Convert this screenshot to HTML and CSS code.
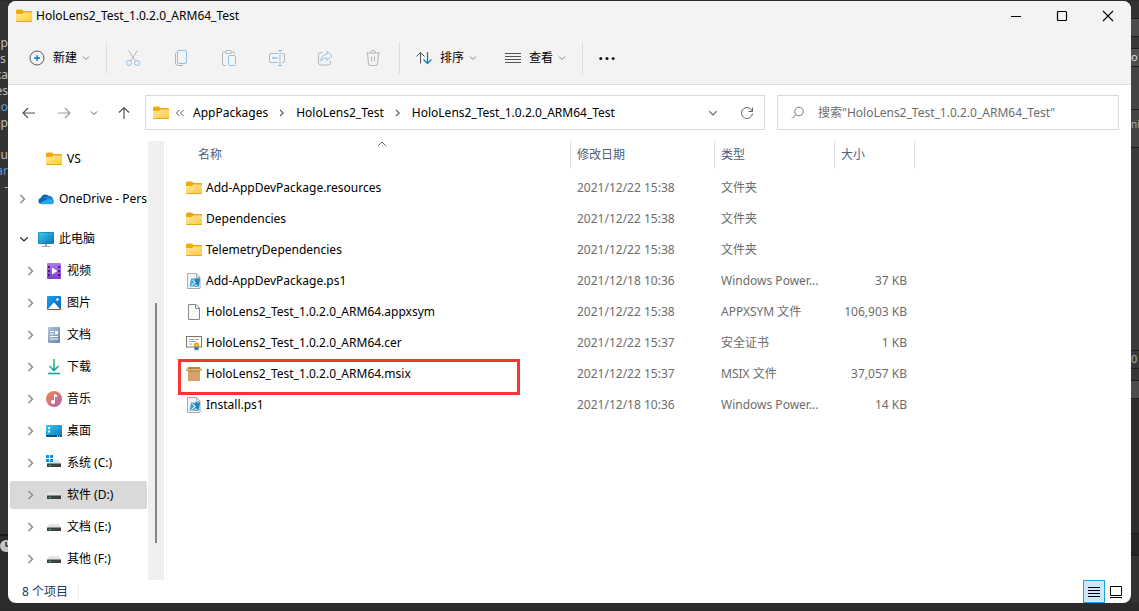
FILE: index.html
```html
<!DOCTYPE html>
<html lang="zh-CN">
<head>
<meta charset="utf-8">
<title>HoloLens2_Test_1.0.2.0_ARM64_Test</title>
<meta name="viewport" content="width=device-width, initial-scale=1">
<link rel="stylesheet" href="styles.css">
</head>
<body>
<svg class="sprite" aria-hidden="true">
  <defs>
    <linearGradient id="gFolder" x1="0" y1="0" x2="1" y2="1"><stop offset="0" stop-color="#ffe9a2"/><stop offset="1" stop-color="#ffc83d"/></linearGradient>
    <linearGradient id="gScreen" x1="0" y1="0" x2="1" y2="1"><stop offset="0" stop-color="#35d0e6"/><stop offset="1" stop-color="#0f6fc0"/></linearGradient>
    <linearGradient id="gVideo" x1="0" y1="0" x2="0" y2="1"><stop offset="0" stop-color="#b176f0"/><stop offset="1" stop-color="#7f3fd0"/></linearGradient>
    <linearGradient id="gPic" x1="0" y1="0" x2="1" y2="1"><stop offset="0" stop-color="#1aa0ec"/><stop offset="1" stop-color="#0b62b8"/></linearGradient>
    <linearGradient id="gDoc" x1="0" y1="0" x2="1" y2="1"><stop offset="0" stop-color="#b4c6da"/><stop offset="1" stop-color="#6686ab"/></linearGradient>
    <linearGradient id="gDown" gradientUnits="userSpaceOnUse" x1="8" y1="0" x2="8" y2="16"><stop offset="0" stop-color="#3cc58d"/><stop offset="1" stop-color="#0c9b97"/></linearGradient>
    <linearGradient id="gMusic" x1="0" y1="0" x2="1" y2="1"><stop offset="0" stop-color="#f7894a"/><stop offset="1" stop-color="#a863b8"/></linearGradient>
  </defs>
  <symbol id="folder" viewBox="0 0 16 16"><path d="M0 3q0-1.500 1.500-1.500h4q.7 0 1.200.6l.8.9H15q1 0 1 1V8H0z" fill="#f2a90c"/><path d="M0 6h6l1.500-1.500H15q1 0 1 1V13q0 1-1 1H1q-1 0-1-1z" fill="url(#gFolder)"/><path d="M.3 13.500h15.400" stroke="#e9a820"/></symbol>
  <symbol id="plus" viewBox="0 0 16 16"><circle cx="8" cy="8" r="7" fill="none" stroke="#5c5c5c"/><path d="M8 5v6M5 8h6" fill="none" stroke="#0078d4" stroke-width="1.300"/></symbol>
  <symbol id="cut" viewBox="0 0 16 16"><path d="M3.500.5l7 10.500M12.500.5l-7 10.500" fill="none" stroke="#b5b5b5"/><circle cx="4" cy="13" r="2.500" fill="none" stroke="#8fc2ea"/><circle cx="12" cy="13" r="2.500" fill="none" stroke="#8fc2ea"/></symbol>
  <symbol id="copy" viewBox="0 0 16 16"><path d="M3.500 2.500Q2.500 3 2.500 4v9q0 2.500 2.500 2.500h5" fill="none" stroke="#b5b5b5"/><rect x="4.500" y=".5" width="9" height="13" rx="1.500" fill="none" stroke="#8fc2ea"/></symbol>
  <symbol id="paste" viewBox="0 0 16 16"><path d="M5 15.500H3q-1.500 0-1.500-1.500V3.500Q1.500 2 3 2h1.500M11 2h1q1.500 0 1.500 1.500V4" fill="none" stroke="#b5b5b5"/><rect x="4.500" y=".5" width="6" height="3" rx="1.500" fill="none" stroke="#b5b5b5"/><rect x="7.500" y="5.500" width="7" height="10" rx="1" fill="none" stroke="#8fc2ea"/></symbol>
  <symbol id="rename" viewBox="0 0 16 16"><path d="M9 3.500H2Q.5 3.500.5 5v6Q.5 12.500 2 12.500h7M13 3.500h1q1.500 0 1.500 1.500v6q0 1.500-1.500 1.500h-1" fill="none" stroke="#b5b5b5"/><path d="M9 .5h4M11 .5v15M9 15.500h4" fill="none" stroke="#8fc2ea"/><path d="M3 8h5.500" stroke="#8fc2ea" stroke-width="1.500"/></symbol>
  <symbol id="share" viewBox="0 0 16 16"><path d="M5.500 2.500H4Q1.500 2.500 1.500 5v7.500Q1.500 15 4 15h7q2.500 0 2.500-2.500V11" fill="none" stroke="#b5b5b5"/><path d="M10 1.500L15 6l-5 4.500V8Q6 7.700 4 11q0-6 6-7z" fill="none" stroke="#8fc2ea" stroke-linejoin="round"/></symbol>
  <symbol id="trash" viewBox="0 0 16 16"><path d="M1 3h14M6 3V1.500Q6 .5 7 .5h2q1 0 1 1V3M2.500 3l1 11q.1 1.500 1.500 1.500h6q1.400 0 1.500-1.500l1-11M6.500 6.500v5M9.500 6.500v5" fill="none" stroke="#b5b5b5"/></symbol>
  <symbol id="sort" viewBox="0 0 16 16"><path d="M4.500 13.500V2.500M.5 6.500l4-4 4 4" fill="none" stroke="#555"/><path d="M11.500 2v11.500M7.500 9.500l4 4 4-4" fill="none" stroke="#0078d4" stroke-width="1.200"/></symbol>
  <symbol id="lines" viewBox="0 0 16 16"><path d="M0 3.500h16M0 6.500h16M0 9.500h16M0 12.500h16" stroke="#555"/></symbol>
  <symbol id="dots" viewBox="0 0 16 16"><g fill="#111"><circle cx="1.800" cy="8.500" r="1.500"/><circle cx="8" cy="8.500" r="1.500"/><circle cx="14.200" cy="8.500" r="1.500"/></g></symbol>
  <symbol id="down" viewBox="0 0 8 8"><path d="M1 2.500l3 3 3-3" fill="none" stroke="currentColor"/></symbol>
  <symbol id="right" viewBox="0 0 8 10"><path d="M1.500 1l4 4-4 4" fill="none" stroke="currentColor" stroke-width="1.400"/></symbol>
  <symbol id="back" viewBox="0 0 16 16"><path d="M14 8H2M7 3L2 8l5 5" fill="none" stroke="currentColor" stroke-width="1.200"/></symbol>
  <symbol id="forward" viewBox="0 0 16 16"><path d="M2 8h12M9 3l5 5-5 5" fill="none" stroke="currentColor" stroke-width="1.200"/></symbol>
  <symbol id="up" viewBox="0 0 16 16"><path d="M8 14V2.500M3 7.500l5-5 5 5" fill="none" stroke="currentColor" stroke-width="1.200"/></symbol>
  <symbol id="refresh" viewBox="0 0 16 16"><path d="M13.300 6.500A5.500 5.500 0 1 0 13.500 8.500M13.500 2.500v4h-4" fill="none" stroke="#666"/></symbol>
  <symbol id="search" viewBox="0 0 16 16"><circle cx="9" cy="6.500" r="4.300" fill="none" stroke="#777"/><path d="M6 9.500L2 13.500" stroke="#777"/></symbol>
  <symbol id="cloud" viewBox="0 0 16 16"><path d="M3 13a3 3 0 0 1-.3-5.900A4.700 4.700 0 0 1 11.200 5.600 4 4 0 0 1 13 13z" fill="#0a64bd"/><path d="M5 7L9.500 5a4.700 4.700 0 0 1 6 4.500l-5-1z" fill="#1580d4"/><path d="M1.500 12.300L9.500 8a3 3 0 0 1 2 .7 2.700 2.700 0 0 1 4.500 2.200A2.600 2.600 0 0 1 13.500 13.300H3.500a3 3 0 0 1-2-1z" fill="#2aa7ea"/></symbol>
  <symbol id="pc" viewBox="0 0 16 16"><rect y="1" width="16" height="12" rx="1" fill="#1679b8"/><rect x=".7" y="1.700" width="14.600" height="10.600" fill="url(#gScreen)"/><path d="M7 13h2v2H7zM4 15h8v1H4z" fill="#9aa4ac"/></symbol>
  <symbol id="video" viewBox="0 0 16 16"><rect x="1" y="0" width="14" height="16" rx="1" fill="url(#gVideo)"/><path d="M2 3h2v2H2zM2 7h2v2H2zM2 11h2v2H2zM12 3h2v2h-2zM12 7h2v2h-2zM12 11h2v2h-2z" fill="#44207a"/><path d="M6 4.500L11.500 8 6 11.500z" fill="#fff"/></symbol>
  <symbol id="pic" viewBox="0 0 16 16"><rect x="1" y="1" width="14" height="14" rx="1" fill="url(#gPic)"/><path d="M2 14l5.300-6q.7-.6 1.400 0l5.300 6z" fill="#fff"/><circle cx="11.500" cy="4.500" r="1.300" fill="#fff"/></symbol>
  <symbol id="doc" viewBox="0 0 16 16"><rect x="2" y="0" width="12" height="16" rx="1" fill="url(#gDoc)"/><path d="M4 4.500h4M4 7h4M4 9.500h8M4 12h8" stroke="#fff" stroke-width="1.200"/><path d="M9 4h3v3.500H9z" fill="#fff"/></symbol>
  <symbol id="download" viewBox="0 0 16 16"><path d="M8 0v11M3.500 7L8 11.500 12.500 7M2 14.500h12" fill="none" stroke="url(#gDown)" stroke-width="1.700"/></symbol>
  <symbol id="music" viewBox="0 0 16 16"><circle cx="8" cy="8" r="8" fill="url(#gMusic)"/><path d="M8 3l3 1v2L9 5.500V11a2 2 0 1 1-1-1.700z" fill="#fff"/></symbol>
  <symbol id="desk" viewBox="0 0 16 16"><rect y="2" width="16" height="12" rx="1" fill="url(#gScreen)"/><path d="M0 12h16v1q0 1-1 1H1q-1 0-1-1z" fill="#0a4f7d"/><path d="M2 4h2v2H2zM2 7.500h2v2H2z" fill="#fff"/><path d="M11 13h1M13 13h1" stroke="#fff"/></symbol>
  <symbol id="drive" viewBox="0 0 16 16"><path d="M3.500 5h9L15 9H1z" fill="#dfe2e6"/><path d="M1 8.500h14V12H1z" fill="#3f3f41"/><path d="M3 10h2v1H3z" fill="#35e040"/></symbol>
  <symbol id="sysdrive" viewBox="0 0 16 16"><path d="M3.500 5h9L15 9H1z" fill="#dfe2e6"/><path d="M1 8.500h14V12H1z" fill="#3f3f41"/><path d="M3 10h2v1H3z" fill="#35e040"/><path d="M0 0h3v3H0zM4 0h3v3H4zM0 4h3v3H0zM4 4h3v3H4z" fill="#1690e0"/></symbol>
  <symbol id="file" viewBox="0 0 16 16"><path d="M2.500.5h7.500l3.500 3.500v11.500h-11z" fill="#fbfbfb" stroke="#868686"/><path d="M9.500.5v4h4" fill="none" stroke="#868686"/></symbol>
  <symbol id="ps" viewBox="0 0 16 16"><path d="M1.500.5h9l3.500 3.500v11.500H1.500z" fill="#f1f3f4" stroke="#a9adb0"/><path d="M10.500.5v4H14" fill="none" stroke="#a9adb0"/><path d="M5 5.500h9L12.500 13.500H3.500z" fill="#4aa9d6"/><path d="M9 5.500h5L12.500 13.500H9z" fill="#2383b8"/><path d="M6.500 7l3 2.500-4 2.700M9 12.200h2.500" fill="none" stroke="#fff"/></symbol>
  <symbol id="cert" viewBox="0 0 16 16"><rect x=".5" y="1.500" width="15" height="10.500" fill="#fff" stroke="#7e7462"/><path d="M3 4.500h5M9 4.500h4M3 6.500h7M3 9h3" stroke="#9aa6cc"/><path d="M8.500 11v4.500l2-1 2 1V11z" fill="#2462b5"/><circle cx="10.500" cy="10" r="2.600" fill="#dda118"/><circle cx="10.500" cy="10" r="1" fill="#f7d060"/></symbol>
  <symbol id="box" viewBox="0 0 16 16"><path d="M2 4h12v11H2z" fill="#d5a365"/><path d="M2 1h12v3H2z" fill="#b98543"/><path d="M2 1L0 3.500V5h2l1-1h10l1 1h2V3.500L14 1v2H2z" fill="#dfb379"/><path d="M2 5h12" stroke="#b98543"/></symbol>
</svg>

<div class="desktop">
  <div class="editor" aria-hidden="true">
    <div class="code"><span>p</span><span class="short">s</span><span>xa</span><span>es</span><span class="key">io</span><span>mp</span><span></span><span>u</span><span class="key">ar</span><span>-</span></div>
    <div class="dock"><svg class="clock" viewBox="0 0 12 12"><circle cx="6" cy="6" r="6" fill="#c4c4c4"/><path d="M6 2v4h3" fill="none" stroke="#333" stroke-width="1.500"/></svg></div>
  </div>

  <main class="window">
    <header class="titlebar">
      <svg class="i16"><use href="#folder"/></svg>
      <h1>HoloLens2_Test_1.0.2.0_ARM64_Test</h1>
      <div class="caption">
        <button aria-label="最小化"><svg viewBox="0 0 12 12"><path d="M1 6.500h10" stroke="#000"/></svg></button>
        <button aria-label="最大化"><svg viewBox="0 0 12 12"><rect x="1.500" y="1.500" width="9" height="9" rx="1" fill="none" stroke="#000" stroke-width="1.200"/></svg></button>
        <button aria-label="关闭"><svg viewBox="0 0 12 12"><path d="M1 1l10 10M11 1L1 11" stroke="#000" stroke-width="1.100"/></svg></button>
      </div>
    </header>

    <div class="toolbar" role="toolbar">
      <button class="command"><svg class="i16"><use href="#plus"/></svg>新建<svg class="i8"><use href="#down"/></svg></button>
      <div class="tools">
        <button disabled aria-label="剪切"><svg class="i16"><use href="#cut"/></svg></button>
        <button disabled aria-label="复制"><svg class="i16"><use href="#copy"/></svg></button>
        <button disabled aria-label="粘贴"><svg class="i16"><use href="#paste"/></svg></button>
        <button disabled aria-label="重命名"><svg class="i16"><use href="#rename"/></svg></button>
        <button disabled aria-label="共享"><svg class="i16"><use href="#share"/></svg></button>
        <button disabled aria-label="删除"><svg class="i16"><use href="#trash"/></svg></button>
      </div>
      <div class="arrange">
        <button class="command"><svg class="i16"><use href="#sort"/></svg>排序<svg class="i8"><use href="#down"/></svg></button>
        <button class="command"><svg class="i16"><use href="#lines"/></svg>查看<svg class="i8"><use href="#down"/></svg></button>
      </div>
      <button class="command" aria-label="查看更多"><svg class="i16"><use href="#dots"/></svg></button>
    </div>

    <div class="navbar">
      <nav class="history">
        <button class="back" aria-label="返回"><svg class="i16"><use href="#back"/></svg></button>
        <button class="dim" aria-label="前进"><svg class="i16"><use href="#forward"/></svg></button>
        <button class="recent" aria-label="最近浏览的位置"><svg class="i8"><use href="#down"/></svg></button>
        <button class="parent" aria-label="向上"><svg class="i16"><use href="#up"/></svg></button>
      </nav>
      <div class="address">
        <svg class="i16"><use href="#folder"/></svg>
        <svg class="more" viewBox="0 0 8 8"><path d="M3.500 1l-3 3 3 3M7.500 1l-3 3 3 3" fill="none" stroke="#555"/></svg>
        <a href="#a">AppPackages</a><svg class="crumb"><use href="#right"/></svg>
        <a href="#b">HoloLens2_Test</a><svg class="crumb"><use href="#right"/></svg>
        <a href="#c">HoloLens2_Test_1.0.2.0_ARM64_Test</a>
        <div class="actions">
          <button aria-label="以前的位置"><svg class="i10"><use href="#down"/></svg></button>
          <button aria-label="刷新"><svg class="i16"><use href="#refresh"/></svg></button>
        </div>
      </div>
      <label class="search"><svg class="i16"><use href="#search"/></svg><input type="text" aria-label="搜索" placeholder='搜索"HoloLens2_Test_1.0.2.0_ARM64_Test"'></label>
    </div>

    <div class="body">
      <nav class="tree">
        <ul>
          <li><a class="child" href="#vs"><i></i><svg class="i16"><use href="#folder"/></svg><span>VS</span></a></li>
        </ul>
        <ul>
          <li><a href="#od"><i><svg class="arrow"><use href="#right"/></svg></i><svg class="i16"><use href="#cloud"/></svg><span>OneDrive - Personal</span></a></li>
        </ul>
        <ul>
          <li><a href="#pc"><i class="open"><svg class="i10"><use href="#down"/></svg></i><svg class="i16"><use href="#pc"/></svg><span>此电脑</span></a></li>
          <li><a class="child" href="#1"><i><svg class="arrow"><use href="#right"/></svg></i><svg class="i16"><use href="#video"/></svg><span>视频</span></a></li>
          <li><a class="child" href="#2"><i><svg class="arrow"><use href="#right"/></svg></i><svg class="i16"><use href="#pic"/></svg><span>图片</span></a></li>
          <li><a class="child" href="#3"><i><svg class="arrow"><use href="#right"/></svg></i><svg class="i16"><use href="#doc"/></svg><span>文档</span></a></li>
          <li><a class="child" href="#4"><i><svg class="arrow"><use href="#right"/></svg></i><svg class="i16"><use href="#download"/></svg><span>下载</span></a></li>
          <li><a class="child" href="#5"><i><svg class="arrow"><use href="#right"/></svg></i><svg class="i16"><use href="#music"/></svg><span>音乐</span></a></li>
          <li><a class="child" href="#6"><i><svg class="arrow"><use href="#right"/></svg></i><svg class="i16"><use href="#desk"/></svg><span>桌面</span></a></li>
          <li><a class="child" href="#7"><i><svg class="arrow"><use href="#right"/></svg></i><svg class="i16"><use href="#sysdrive"/></svg><span>系统 (C:)</span></a></li>
          <li><a class="child current" href="#8"><i><svg class="arrow"><use href="#right"/></svg></i><svg class="i16"><use href="#drive"/></svg><span>软件 (D:)</span></a></li>
          <li><a class="child" href="#9"><i><svg class="arrow"><use href="#right"/></svg></i><svg class="i16"><use href="#drive"/></svg><span>文档 (E:)</span></a></li>
          <li><a class="child" href="#10"><i><svg class="arrow"><use href="#right"/></svg></i><svg class="i16"><use href="#drive"/></svg><span>其他 (F:)</span></a></li>
        </ul>
      </nav>
      <div class="track"><div class="thumb"></div></div>
      <section class="files">
        <table>
          <colgroup><col class="c-name"><col class="c-date"><col class="c-type"><col class="c-size"></colgroup>
          <thead><tr><th scope="col" class="name"><div>名称<svg class="sorted" viewBox="0 0 10 6"><path d="M1 5l4-4 4 4" fill="none" stroke="#666"/></svg></div></th><th scope="col"><div>修改日期</div></th><th scope="col"><div>类型</div></th><th scope="col"><div>大小</div></th></tr></thead>
          <tbody>
            <tr><td><div class="entry"><svg class="i16"><use href="#folder"/></svg>Add-AppDevPackage.resources</div></td><td>2021/12/22 15:38</td><td>文件夹</td><td></td></tr>
            <tr><td><div class="entry"><svg class="i16"><use href="#folder"/></svg>Dependencies</div></td><td>2021/12/22 15:38</td><td>文件夹</td><td></td></tr>
            <tr><td><div class="entry"><svg class="i16"><use href="#folder"/></svg>TelemetryDependencies</div></td><td>2021/12/22 15:38</td><td>文件夹</td><td></td></tr>
            <tr><td><div class="entry"><svg class="i16"><use href="#ps"/></svg>Add-AppDevPackage.ps1</div></td><td>2021/12/18 10:36</td><td>Windows Power...</td><td>37 KB</td></tr>
            <tr><td><div class="entry"><svg class="i16"><use href="#file"/></svg>HoloLens2_Test_1.0.2.0_ARM64.appxsym</div></td><td>2021/12/22 15:38</td><td>APPXSYM 文件</td><td>106,903 KB</td></tr>
            <tr><td><div class="entry"><svg class="i16"><use href="#cert"/></svg>HoloLens2_Test_1.0.2.0_ARM64.cer</div></td><td>2021/12/22 15:37</td><td>安全证书</td><td>1 KB</td></tr>
            <tr><td><div class="entry marked"><svg class="i16"><use href="#box"/></svg>HoloLens2_Test_1.0.2.0_ARM64.msix</div></td><td>2021/12/22 15:37</td><td>MSIX 文件</td><td>37,057 KB</td></tr>
            <tr><td><div class="entry"><svg class="i16"><use href="#ps"/></svg>Install.ps1</div></td><td>2021/12/18 10:36</td><td>Windows Power...</td><td>14 KB</td></tr>
          </tbody>
        </table>
      </section>
    </div>

    <footer class="status">
      <span>8 个项目</span>
      <div class="views">
        <button class="on" aria-label="详细信息"><svg viewBox="0 0 16 16"><path d="M2 3.500h12M2 6.500h12M2 9.500h12M2 12.500h12" stroke="#000"/></svg></button>
        <button aria-label="大缩略图"><svg viewBox="0 0 16 16"><path d="M2.500 2.500h11v9h-11zM2 13.500h12" fill="none" stroke="#000"/></svg></button>
      </div>
    </footer>
  </main>

  <div class="panels" aria-hidden="true"><div class="p1"></div><div class="p2"></div><div class="p3"></div><div class="p4">o</div><div class="p5"></div><div class="p6">ni</div><div class="p7"></div><div class="p8">0</div><div class="p3"></div><div class="p2"></div><div class="p9"></div><div class="p10"></div></div>
</div>
</body>
</html>
```
FILE: styles.css
```css
* { box-sizing: border-box; }
body {
  margin: 0;
  background: #2a2a2a;
  color: #000;
  font: 12px/16px "Noto Sans", "Noto Sans CJK SC", sans-serif;
}
button {
  display: flex;
  align-items: center;
  justify-content: center;
  margin: 0;
  padding: 0;
  border: 0;
  background: none;
  color: inherit;
  font: inherit;
}
a { color: inherit; text-decoration: none; }
svg { display: block; flex: none; }
.sprite { position: absolute; width: 0; height: 0; }
.i16 { width: 16px; height: 16px; }
.i10 { width: 10px; height: 10px; }
.i8 { width: 8px; height: 8px; }

.desktop {
  display: grid;
  grid-template-columns: 8px minmax(0, 1fr) 8px;
  height: 100vh;
  padding: 1px 0 8px;
  background: #2b2b2b;
}

/* Applications behind the window */
.editor { display: flex; flex-direction: column; overflow: hidden; background: #333; }
.code { flex: 1; min-height: 0; padding-top: 34px; color: #bdbdbd; font-size: 12px; }
.code span { display: flex; justify-content: flex-end; height: 16px; }
.code .short { justify-content: flex-start; }
.code .key { color: #5f97dc; }
.dock { height: 69px; padding-top: 4px; border-top: 2px solid #1a1a1a; background: #2c2c2c; }
.clock { width: 12px; height: 12px; }
.panels { display: flex; flex-direction: column; overflow: hidden; background: #333; color: #aaa; font-size: 11px; }
.panels div { flex: none; border-bottom: 1px solid #1e1e1e; }
.p1 { height: 18px; }
.p2 { height: 18px; background: #4c4c4c; }
.p3 { height: 12px; background: #383838; }
.p4 { height: 18px; background: #505050; color: #ddd; }
.p5 { height: 43px; background: #444; }
.p6 { height: 38px; padding-top: 6px; background: #444; font-size: 10px; }
.p7 { height: 203px; background: #3a3a3a; }
.p8 { height: 18px; background: #3a3a3a; }
.p9 { height: 135px; background: #2e2e2e; }
.p10 { height: 22px; background: #262626; }

.window {
  display: flex;
  flex-direction: column;
  min-width: 0;
  overflow: hidden;
  border-radius: 8px;
  background: #fff;
}

.titlebar { display: flex; align-items: center; gap: 4px; height: 30px; padding-left: 8px; background: #f3f3f3; }
.titlebar h1 { margin: 0; font-size: 12px; font-weight: 400; }
.caption { display: flex; align-self: stretch; margin-left: auto; }
.caption button { width: 46px; }
.caption svg { width: 12px; height: 12px; }

.toolbar { display: flex; align-items: center; height: 54px; padding-left: 21px; border-bottom: 1px solid #dedede; background: #f3f3f3; }
.command { gap: 8px; }
.command .i8 { margin-left: -3px; color: #888; }
.tools, .arrange { display: flex; align-items: center; height: 32px; border-right: 1px solid #dedede; }
.tools { margin-left: 16px; padding: 0 2px; border-left: 1px solid #dedede; }
.tools button { width: 48px; height: 32px; }
.arrange { gap: 28px; margin-right: 16px; padding: 0 16px; }

.navbar {
  display: grid;
  grid-template-columns: auto minmax(0, 620fr) minmax(0, 342fr);
  align-items: center;
  gap: 12px;
  height: 56px;
  padding: 0 12px 1px 9px;
}
.history { display: flex; color: #555; }
.history button { width: 30px; height: 32px; }
.history .back { width: 24px; margin-right: 8px; }
.history .recent { margin-right: 6px; }
.history .parent { width: 18px; }
.history .dim { color: #999; }
.address, .search { display: flex; align-items: center; height: 35px; border: 1px solid #d9d9d9; }
.address { padding-left: 7px; white-space: nowrap; }
.more { width: 8px; height: 8px; margin: 0 9px 0 7px; }
.crumb { width: 8px; height: 8px; margin: 0 10px; color: #555; }
.actions { display: flex; margin-left: auto; color: #666; }
.actions button { width: 34px; height: 32px; }
.search { gap: 12px; padding: 0 12px; }
.search input { flex: 1; min-width: 0; padding: 0; border: 0; outline: 0; background: none; font: inherit; }
.search input::placeholder { color: #6d6d6d; opacity: 1; }

.body { display: flex; flex: 1; min-height: 0; }
.tree { flex: none; width: 140px; padding: 2px 1px 0 2px; overflow: hidden; }
.tree ul { margin: 0 0 8px; padding: 0; list-style: none; }
.tree li { padding: 2px 0; }
.tree a { display: flex; align-items: center; gap: 5px; height: 28px; padding-left: 9px; border-radius: 2px; white-space: nowrap; overflow: hidden; }
.tree .child { padding-left: 17px; }
.tree .current { background: #d9d9d9; }
.tree i { display: flex; flex: none; width: 14px; color: #888; }
.tree .open { color: #222; }
.arrow { width: 8px; height: 10px; }
.track { flex: none; width: 16px; padding-top: 162px; background: #efefef; }
.thumb { width: 2px; height: 240px; margin-left: 7px; background: #858585; }

.files { flex: 1; min-width: 0; margin-left: 2px; overflow: hidden; border-left: 1px solid #f5f5f5; }
table { width: 748px; table-layout: fixed; border-collapse: collapse; }
.c-name { width: 404px; }
.c-date { width: 144px; }
.c-type { width: 120px; }
.c-size { width: 80px; }
th { height: 31px; padding: 0 0 3px; color: #4c607a; font-weight: 400; text-align: left; }
th div { height: 28px; padding: 6px 0 0 6px; border-right: 1px solid #e2e2e2; }
th.name div { position: relative; padding-left: 31px; }
.sorted { position: absolute; top: 0; left: 210px; width: 10px; height: 6px; }
td { height: 31px; padding: 0 0 0 6px; color: #6d6d6d; white-space: nowrap; }
td:first-child { padding: 0 51px 0 11px; color: #000; }
td:last-child { padding: 0 8px 0 0; text-align: right; }
.entry { display: flex; align-items: center; gap: 4px; height: 31px; padding-left: 8px; }
.marked { position: relative; }
.marked::after { content: ""; position: absolute; inset: 1px 0 -6px 0; border: 3px solid #f93434; }

.status { display: flex; align-items: center; height: 23px; padding: 0 4px 0 14px; color: #1e395b; }
.status > span { padding-right: 10px; border-right: 1px solid #f0f0f0; }
.views { display: flex; margin-left: auto; }
.views button { width: 22px; height: 23px; }
.views .on { border: 1px solid #26a0da; background: #cce8f6; }
.views svg { width: 16px; height: 16px; }
```
